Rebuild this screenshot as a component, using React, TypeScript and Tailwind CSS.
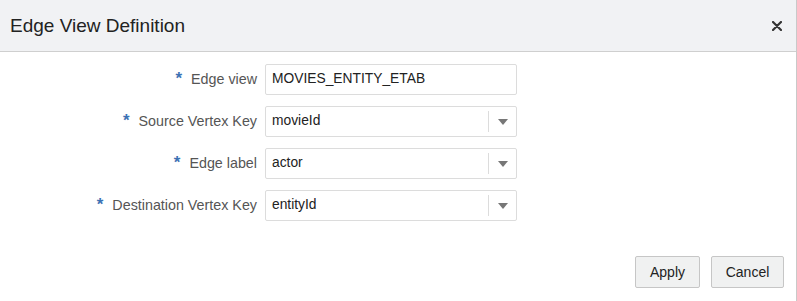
import React from 'react';

const font = { fontFamily: '"Liberation Sans", Arial, sans-serif' };

const Caret = () => (
  <svg width="10" height="6" viewBox="0 0 10 6" className="text-[#777]">
    <path d="M0 0h10L5 6z" fill="currentColor" />
  </svg>
);

type Row = { label: string; value: string; select?: boolean };

const rows: Row[] = [
  { label: 'Edge view', value: 'MOVIES_ENTITY_ETAB' },
  { label: 'Source Vertex Key', value: 'movieId', select: true },
  { label: 'Edge label', value: 'actor', select: true },
  { label: 'Destination Vertex Key', value: 'entityId', select: true },
];

export default function App() {
  return (
    <div style={font} className="w-[797px] h-[301px] bg-white border-r border-[#c9c9c9] flex flex-col">
      <div className="h-[52px] shrink-0 bg-[#f1f2f4] border-b border-[#cfcfcf] flex items-center justify-between pl-[10px] pr-[13px]">
        <h2 className="text-[19px] text-[#222] pt-[1px]">Edge View Definition</h2>
        <button className="w-[12px] h-[12px] flex items-center justify-center">
          <svg width="10" height="10" viewBox="0 0 10 10">
            <path d="M1 1l8 8M9 1l-8 8" stroke="#333" strokeWidth="2.2" strokeLinecap="round" />
          </svg>
        </button>
      </div>

      <div className="flex flex-col gap-[11px] pt-[12px]">
        {rows.map((r) => (
          <div key={r.label} className="flex items-center">
            <div className="w-[257px] flex justify-end items-start text-[14.3px] text-[#555]">
              <span className="text-[#3d72b4] text-[17px] font-bold leading-none mr-[9px] mt-[1px]">*</span>
              <span>{r.label}</span>
            </div>
            <div className="ml-[8px] w-[252px] h-[31px] border border-[#dcdcdc] rounded-[2px] flex items-center">
              <span className="flex-1 pl-[6px] text-[13.8px] text-[#222]">{r.value}</span>
              {r.select && (
                <div className="w-[28px] h-[21px] border-l border-[#dcdcdc] flex items-center justify-center">
                  <Caret />
                </div>
              )}
            </div>
          </div>
        ))}
      </div>

      <div className="mt-auto flex justify-end gap-[11px] pr-[12px] pb-[13px]">
        <button className="w-[65px] h-[32px] bg-[#f0f1f1] border border-[#c6c6c6] rounded-[2px] text-[14px] text-[#222]">Apply</button>
        <button className="w-[73px] h-[32px] bg-[#f0f1f1] border border-[#c6c6c6] rounded-[2px] text-[14px] text-[#222]">Cancel</button>
      </div>
    </div>
  );
}
